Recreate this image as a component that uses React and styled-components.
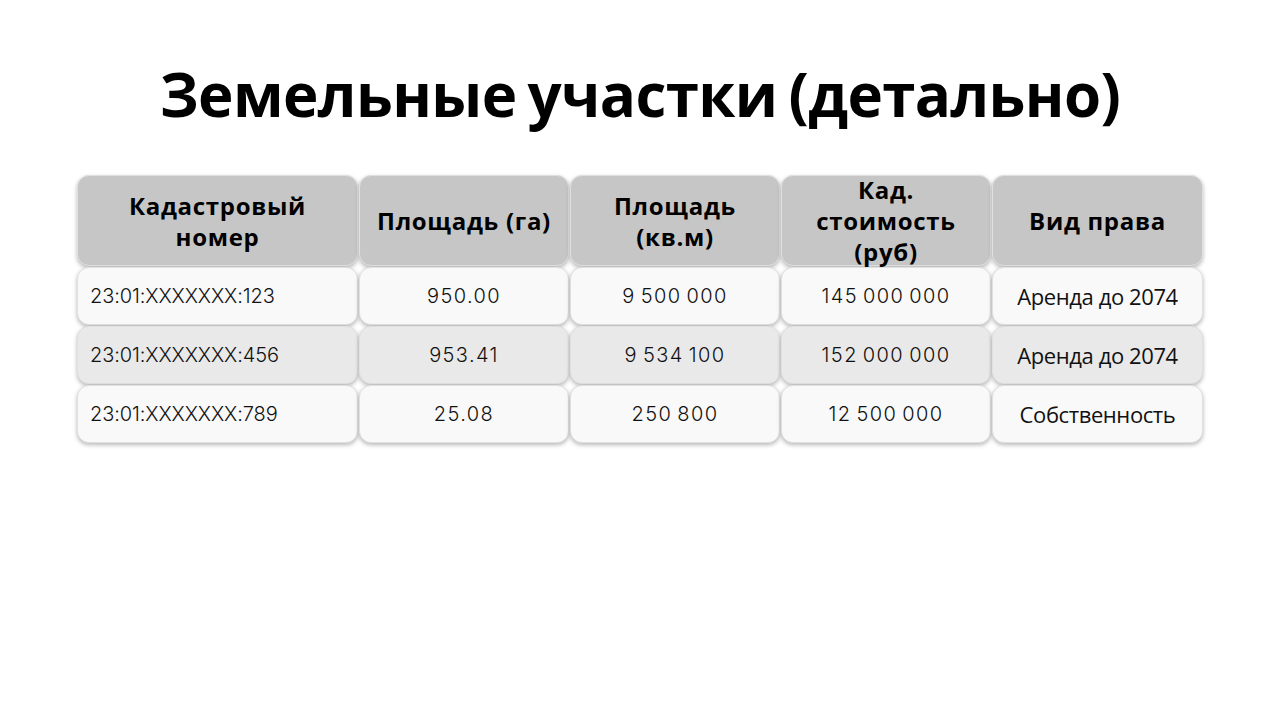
import React from 'react';
import styled, { createGlobalStyle } from 'styled-components';

const GlobalStyle = createGlobalStyle`
  html, body {
    margin: 0;
    padding: 0;
    background: #ffffff;
  }
`;

const Page = styled.div`
  width: 1280px;
  height: 720px;
  box-sizing: border-box;
  padding-top: 54px;
  display: flex;
  flex-direction: column;
  align-items: center;
`;

const Title = styled.h1`
  margin: 0;
  font-family: "Open Sans", sans-serif;
  font-weight: 700;
  font-size: 60px;
  line-height: 80px;
  letter-spacing: -0.6px;
  word-spacing: -4px;
  color: #000;
`;

const Table = styled.div`
  margin-top: 41px;
  display: grid;
  grid-template-columns: 281px 210px 210px 210px 211px;
  grid-template-rows: 91px;
  grid-auto-rows: 58px;
  gap: 1px;
`;

const Cell = styled.div`
  box-sizing: border-box;
  display: flex;
  align-items: center;
  justify-content: ${p => (p.$left ? 'flex-start' : 'center')};
  padding: 0 12px;
  border-radius: 12px;
  border: 1px solid #e0e0e0;
  box-shadow: 0 2px 4px rgba(0, 0, 0, 0.28);
  background: ${p => p.$bg};
  color: #111;
  text-align: center;
`;

const HeadCell = styled(Cell)`
  font-family: "Open Sans", sans-serif;
  font-weight: 700;
  font-size: 24px;
  line-height: 31px;
  letter-spacing: 0.7px;
  color: #000;
`;

const DataCell = styled(Cell)`
  font-family: ${p => (p.$text ? '"Open Sans", sans-serif' : 'Inter, sans-serif')};
  font-size: ${p => (p.$text ? '22px' : '20px')};
  font-weight: ${p => (p.$text ? 400 : 300)};
  letter-spacing: ${p => (p.$text ? '-0.4px' : p.$left ? '-0.1px' : '1.4px')};
  white-space: nowrap;
`;

const headers = ['Кадастровый номер', 'Площадь (га)', 'Площадь (кв.м)', 'Кад. стоимость (руб)', 'Вид права'];

const rows = [
  ['23:01:XXXXXXX:123', '950.00', '9\u2009500\u2009000', '145\u2009000\u2009000', 'Аренда до 2074'],
  ['23:01:XXXXXXX:456', '953.41', '9\u2009534\u2009100', '152\u2009000\u2009000', 'Аренда до 2074'],
  ['23:01:XXXXXXX:789', '25.08', '250\u2009800', '12\u2009500\u2009000', 'Собственность'],
];

const App = () => {
  return (
    <Page>
      <GlobalStyle />
      <Title>Земельные участки (детально)</Title>
      <Table>
        {headers.map(h => (
          <HeadCell key={h} $bg="#c6c6c6">{h}</HeadCell>
        ))}
        {rows.map((row, i) =>
          row.map((v, j) => (
            <DataCell
              key={`${i}-${j}`}
              $bg={i === 1 ? '#e9e9e9' : '#f9f9f9'}
              $left={j === 0}
              $text={j === 4}
            >
              {v}
            </DataCell>
          ))
        )}
      </Table>
    </Page>
  );
};

export default App;
